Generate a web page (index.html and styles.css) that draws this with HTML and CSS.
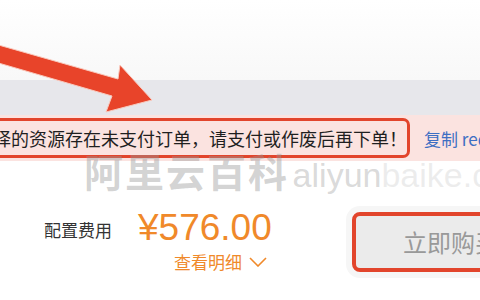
FILE: index.html
```html
<!DOCTYPE html>
<html lang="zh-CN">
<head>
    <meta charset="UTF-8">
    <meta name="viewport" content="width=device-width, initial-scale=1.0">
    <title>确认订单</title>
    <link rel="stylesheet" href="styles.css">
</head>
<body>

<div class="page">
    <div class="top"></div>
    <div class="band"></div>

    <div class="notice">
        <div class="msg">您选择的资源存在未支付订单，请支付或作废后再下单<span class="end">！</span></div>
        <a class="copy" href="#">复制 requestId</a>
    </div>

    <div class="order">
        <div class="label">配置费用</div>
        <div class="price-col">
            <div class="price">¥576.00</div>
            <div class="detail">查看明细
                <svg class="chev" width="18" height="10" viewBox="0 0 18 10">
                    <path d="M1 1 L9 9 L17 1" fill="none" stroke="#f0892a" stroke-width="1.6"/>
                </svg>
            </div>
        </div>
        <div class="buy">立即购买</div>
    </div>

    <div class="watermark"><b>阿里云百科</b> <span class="dom1">aliyun</span><span class="dom2">baike.com</span></div>

    <svg class="arrow" width="480" height="300" viewBox="0 0 480 300">
        <polygon points="-5,44 118,79 120,65 152,100 106,112 112,96 -5,62"
                 fill="#e8442a" stroke="#f9c9bd" stroke-width="1" stroke-linejoin="miter"/>
    </svg>
</div>

</body>
</html>
```

FILE: styles.css
```css
body {
    margin: 0;
    background-color: white;
    font-family: "Noto Sans CJK SC", "Noto Sans", sans-serif;
    overflow: hidden;
}
.page {
    position: relative;
    width: 480px;
    height: 300px;
    overflow: hidden;
}
.top {
    height: 80px;
    background: linear-gradient(#ffffff, #f8f8f8);
}
.band {
    height: 35px;
    background-color: #e7e7eb;
}
.notice {
    height: 46px;
    display: flex;
    align-items: center;
    background-color: #fbe3e0;
    white-space: nowrap;
}
.msg {
    margin-left: -58px;
    padding: 0 9px 0 12px;
    height: 34px;
    line-height: 34px;
    border: 3px solid #e2452c;
    border-radius: 7px;
    font-size: 18px;
    color: #1f1f1f;
}
.end {
    font-feature-settings: "halt";
}
.copy {
    margin-left: 14px;
    font-size: 17px;
    color: #3e6fc3;
    text-decoration: none;
}
.order {
    display: grid;
    grid-template-columns: 94px 214px 200px;
    padding: 47px 0 0 44px;
}
.label {
    margin-top: 10px;
    font-size: 17px;
    line-height: 24px;
    color: #333;
}
.price {
    font-family: "Liberation Sans", Arial, sans-serif;
    font-size: 37px;
    line-height: 40px;
    color: #f0892a;
}
.detail {
    margin: 2px 0 0 36px;
    font-size: 17px;
    line-height: 24px;
    color: #f0892a;
}
.chev {
    margin-left: 3px;
    vertical-align: 2px;
}
.buy {
    margin-top: 4px;
    height: 52px;
    line-height: 52px;
    padding-left: 47px;
    border: 4px solid #e2452c;
    border-radius: 8px;
    background-color: #ebebeb;
    box-shadow: 0 0 0 6px #f6f6f6;
    font-size: 24px;
    color: #999;
    white-space: nowrap;
}
.watermark {
    position: absolute;
    left: 84px;
    top: 150px;
    line-height: 40px;
    white-space: nowrap;
    pointer-events: none;
}
.watermark b {
    font-size: 39px;
    letter-spacing: 2px;
    color: rgba(150, 150, 150, 0.42);
}
.dom1,
.dom2 {
    font-family: "Liberation Sans", Arial, sans-serif;
    font-size: 34px;
}
.dom1 {
    color: rgba(160, 160, 160, 0.4);
}
.dom2 {
    color: rgba(190, 190, 190, 0.28);
}
.arrow {
    position: absolute;
    left: 0;
    top: 0;
    pointer-events: none;
}
```
